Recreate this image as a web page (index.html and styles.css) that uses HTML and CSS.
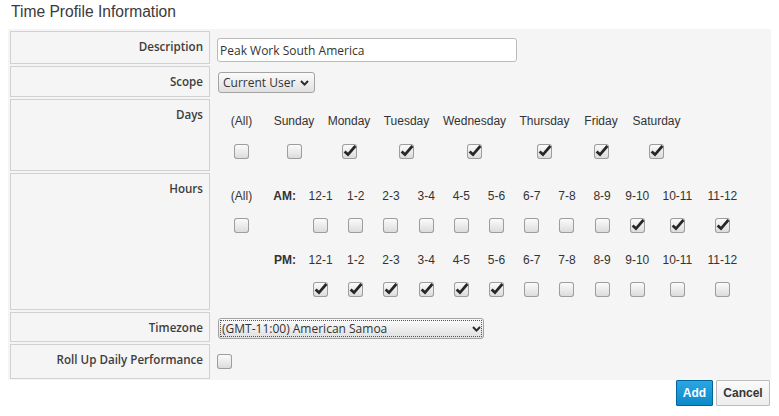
FILE: index.html
```html
<!DOCTYPE html>
<html lang="en">
<head>
<meta charset="utf-8">
<title>Time Profile Information</title>
<link rel="stylesheet" href="styles.css">
</head>
<body>
<h3 class="title">Time Profile Information</h3>
<div class="form">
  <div class="lbl">Description</div>
  <div class="val v-desc"><input class="text" type="text" value="Peak Work South America"></div>

  <div class="lbl">Scope</div>
  <div class="val v-scope">
    <div class="select sel-scope"><span>Current User</span><svg class="chev" viewBox="0 0 9 6"><path d="M1 1 L4.5 4.6 L8 1"/></svg></div>
  </div>

  <div class="lbl">Days</div>
  <div class="val v-days">
    <div class="days">
      <span class="t">(All)</span><span class="t">Sunday</span><span class="t">Monday</span><span class="t">Tuesday</span><span class="t">Wednesday</span><span class="t">Thursday</span><span class="t">Friday</span><span class="t">Saturday</span>
      <span class="cb"></span>
      <span class="cb"></span>
      <span class="cb"><svg class="tick" viewBox="0 0 15 15"><path d="M2.6 7.4 L6 10.6 L13.4 2"/></svg></span>
      <span class="cb"><svg class="tick" viewBox="0 0 15 15"><path d="M2.6 7.4 L6 10.6 L13.4 2"/></svg></span>
      <span class="cb"><svg class="tick" viewBox="0 0 15 15"><path d="M2.6 7.4 L6 10.6 L13.4 2"/></svg></span>
      <span class="cb"><svg class="tick" viewBox="0 0 15 15"><path d="M2.6 7.4 L6 10.6 L13.4 2"/></svg></span>
      <span class="cb"><svg class="tick" viewBox="0 0 15 15"><path d="M2.6 7.4 L6 10.6 L13.4 2"/></svg></span>
      <span class="cb"><svg class="tick" viewBox="0 0 15 15"><path d="M2.6 7.4 L6 10.6 L13.4 2"/></svg></span>
    </div>
  </div>

  <div class="lbl">Hours</div>
  <div class="val v-hours">
    <div class="hours">
      <span class="t">(All)</span><span class="t ampm">AM:</span>
      <span class="t">12-1</span><span class="t">1-2</span><span class="t">2-3</span><span class="t">3-4</span><span class="t">4-5</span><span class="t">5-6</span><span class="t">6-7</span><span class="t">7-8</span><span class="t">8-9</span><span class="t">9-10</span><span class="t">10-11</span><span class="t">11-12</span>

      <span class="cb"></span><span></span>
      <span class="cb"></span><span class="cb"></span><span class="cb"></span><span class="cb"></span><span class="cb"></span><span class="cb"></span><span class="cb"></span><span class="cb"></span><span class="cb"></span>
      <span class="cb"><svg class="tick" viewBox="0 0 15 15"><path d="M2.6 7.4 L6 10.6 L13.4 2"/></svg></span>
      <span class="cb"><svg class="tick" viewBox="0 0 15 15"><path d="M2.6 7.4 L6 10.6 L13.4 2"/></svg></span>
      <span class="cb"><svg class="tick" viewBox="0 0 15 15"><path d="M2.6 7.4 L6 10.6 L13.4 2"/></svg></span>

      <span></span><span class="t ampm">PM:</span>
      <span class="t">12-1</span><span class="t">1-2</span><span class="t">2-3</span><span class="t">3-4</span><span class="t">4-5</span><span class="t">5-6</span><span class="t">6-7</span><span class="t">7-8</span><span class="t">8-9</span><span class="t">9-10</span><span class="t">10-11</span><span class="t">11-12</span>

      <span></span><span></span>
      <span class="cb"><svg class="tick" viewBox="0 0 15 15"><path d="M2.6 7.4 L6 10.6 L13.4 2"/></svg></span>
      <span class="cb"><svg class="tick" viewBox="0 0 15 15"><path d="M2.6 7.4 L6 10.6 L13.4 2"/></svg></span>
      <span class="cb"><svg class="tick" viewBox="0 0 15 15"><path d="M2.6 7.4 L6 10.6 L13.4 2"/></svg></span>
      <span class="cb"><svg class="tick" viewBox="0 0 15 15"><path d="M2.6 7.4 L6 10.6 L13.4 2"/></svg></span>
      <span class="cb"><svg class="tick" viewBox="0 0 15 15"><path d="M2.6 7.4 L6 10.6 L13.4 2"/></svg></span>
      <span class="cb"><svg class="tick" viewBox="0 0 15 15"><path d="M2.6 7.4 L6 10.6 L13.4 2"/></svg></span>
      <span class="cb"></span><span class="cb"></span><span class="cb"></span><span class="cb"></span><span class="cb"></span><span class="cb"></span>
    </div>
  </div>

  <div class="lbl">Timezone</div>
  <div class="val v-tz">
    <div class="select sel-tz"><span>(GMT-11:00) American Samoa</span><svg class="chev" viewBox="0 0 9 6"><path d="M1 1 L4.5 4.6 L8 1"/></svg></div>
  </div>

  <div class="lbl">Roll Up Daily Performance</div>
  <div class="val v-roll"><span class="cb"></span></div>
</div>
<div class="actions">
  <button class="btn btn-primary" type="button">Add</button>
  <button class="btn btn-default" type="button">Cancel</button>
</div>
</body>
</html>
```

FILE: styles.css
```css
html, body {
  background: #fff;
}
body {
  margin: 0 8px;
  font-family: "Liberation Sans", Arial, sans-serif;
  color: #333;
}
.title {
  margin: 0 0 7px;
  padding: 2px 0 0 3px;
  font-size: 15.6px;
  line-height: 20px;
  font-weight: normal;
  color: #3a3a3a;
}
.form {
  display: grid;
  grid-template-columns: 200px 1fr;
  grid-template-rows: 33px 31px 72px 137px 30px 35px;
  gap: 2px;
  padding: 2px 2px 1px;
  background: #f5f5f5;
}
.lbl {
  border: 1px solid #d1d1d1;
  padding: 7px 6px 0 0;
  text-align: right;
  font-family: "Open Sans", sans-serif;
  font-size: 11.6px;
  font-weight: 600;
  line-height: 16px;
  color: #3d3d3d;
  white-space: nowrap;
}
.val {
  min-width: 0;
}
.v-desc {
  padding: 7px 0 0 5px;
}
.text {
  display: block;
  width: 300px;
  height: 24px;
  box-sizing: border-box;
  margin: 0;
  padding: 0 2px;
  border: 1px solid #bbb;
  border-radius: 3px;
  background: #fff;
  font-family: "Open Sans", sans-serif;
  font-size: 12px;
  color: #333;
}
.v-scope {
  padding: 6px 0 0 6px;
}
.select {
  display: flex;
  align-items: center;
  justify-content: space-between;
  height: 21px;
  box-sizing: border-box;
  border: 1px solid #a3a3a3;
  border-radius: 3px;
  background: linear-gradient(#fbfbfb, #e0e0e0);
  font-family: "Open Sans", sans-serif;
  font-size: 12px;
  color: #333;
  white-space: nowrap;
}
.sel-scope {
  width: 97px;
  padding: 0 5px 0 4px;
}
.sel-tz {
  width: 266px;
  padding: 0 2px 0 3px;
  outline: 1px dotted #555;
  outline-offset: -3px;
}
.chev {
  width: 9px;
  height: 6px;
  overflow: visible;
}
.chev path {
  fill: none;
  stroke: #2a2a2a;
  stroke-width: 2;
}
.v-tz {
  padding: 6px 0 0 6px;
}
.v-roll {
  padding: 10px 0 0 5px;
}
.v-days {
  padding: 14px 0 0 10px;
}
.v-hours {
  padding: 15px 0 0 10px;
}
.days {
  display: grid;
  grid-template-columns: 39px 42px 44px 47px 65px 51px 38px 49px;
  grid-template-rows: 31px 15px;
  column-gap: 12px;
  justify-items: center;
  align-items: start;
}
.hours {
  display: grid;
  grid-template-columns: 39px 42px repeat(10, 35.2px) 45px 45px;
  grid-template-rows: 30px 34px 30px 15px;
  justify-items: center;
  align-items: start;
}
.t {
  font-size: 12px;
  line-height: 16px;
  color: #333;
  white-space: nowrap;
}
.ampm {
  justify-self: end;
  margin-right: 7px;
  font-weight: bold;
}
.cb {
  display: block;
  width: 15px;
  height: 15px;
  border-radius: 3px;
  background: linear-gradient(#fdfdfd, #dadada);
  box-shadow: inset 0 0 0 1px #9d9d9d;
}
.tick {
  display: block;
  width: 15px;
  height: 15px;
  overflow: visible;
}
.tick path {
  fill: none;
  stroke: #272727;
  stroke-width: 2.7;
  stroke-linejoin: miter;
}
.actions {
  display: flex;
  justify-content: flex-end;
  gap: 3px;
  padding-right: 1px;
}
.btn {
  height: 26px;
  box-sizing: border-box;
  margin: 0;
  padding: 0;
  border-radius: 1px;
  font-family: "Liberation Sans", Arial, sans-serif;
  font-size: 12px;
  font-weight: bold;
}
.btn-primary {
  width: 37px;
  border: 1px solid #00659c;
  background: linear-gradient(#2aa6e2, #0c89c9);
  color: #fff;
}
.btn-default {
  width: 54px;
  border: 1px solid #bbb;
  background: linear-gradient(#fafafa, #ededed);
  color: #363636;
}
```
